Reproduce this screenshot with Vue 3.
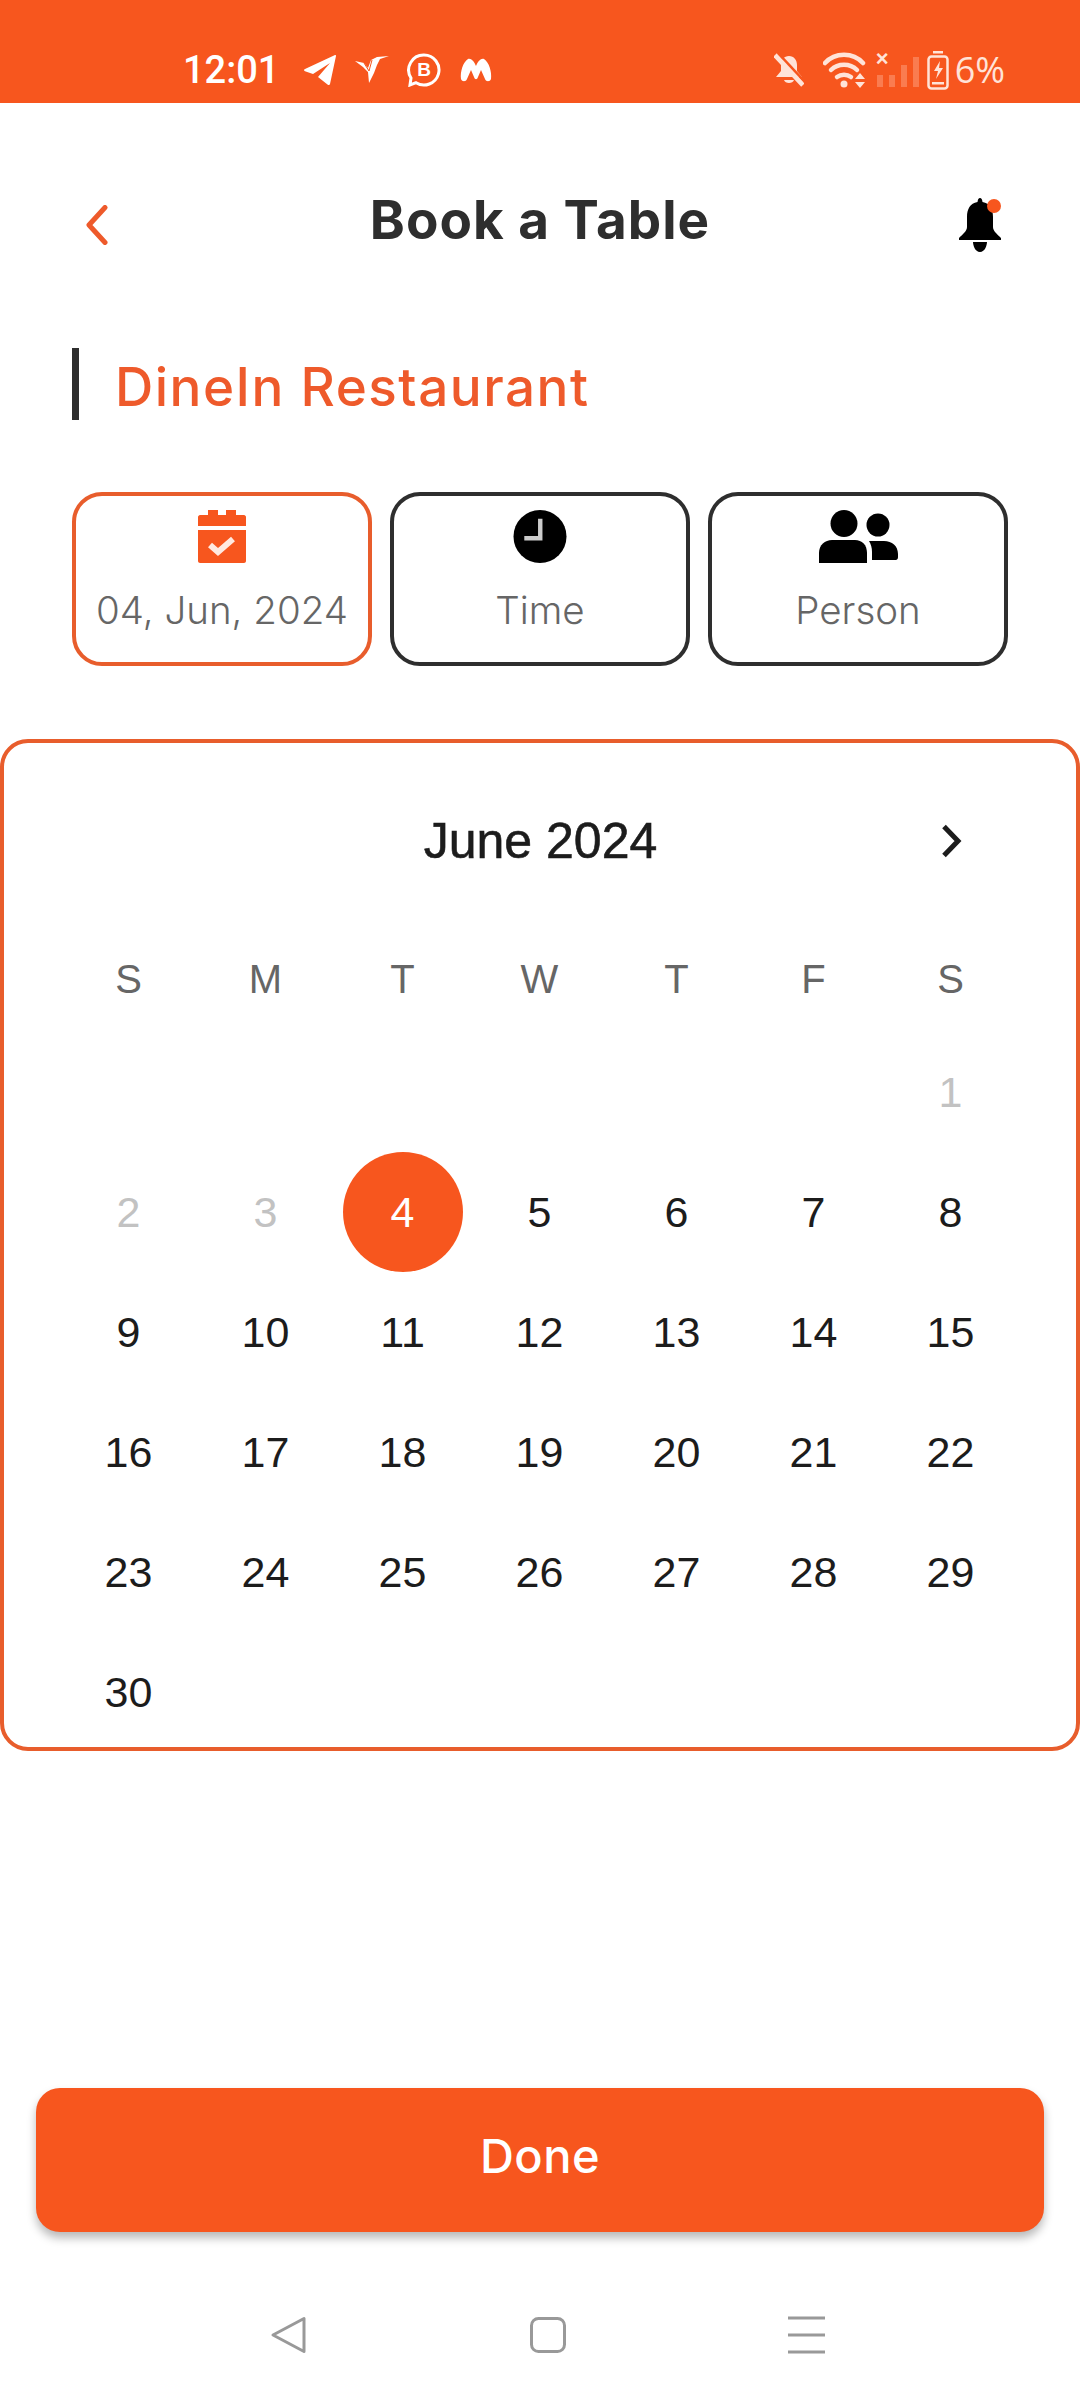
<script setup>
const weekdays = ['S', 'M', 'T', 'W', 'T', 'F', 'S']
const days = []
for (let i = 0; i < 6; i++) days.push({ label: '', cls: '' })
days.push({ label: '1', cls: 'muted' })
for (let d = 2; d <= 30; d++) {
  days.push({ label: String(d), cls: d < 4 ? 'muted' : d === 4 ? 'selected' : '' })
}
</script>

<template>
  <div class="screen">
    <div class="status">
      <div class="status-left">
        <span class="clock">12:01</span>
        <svg class="si" width="34" height="30" viewBox="0 0 34 30"><path fill="#fff" d="M33 1 27 29c-.3 1-1.300 1.300-2.200.7L15 22l12-14-17 11-8-2.800c-1.300-.5-1.300-1.700 0-2.300L31.500.2C32.500-.2 33.300.2 33 1z"/></svg>
        <svg class="si s2" width="34" height="28" viewBox="0 0 34 28"><path fill="#fff" d="M0 5l9 2 4 5 3-8 6-3 12-1-9 3-3 6-3 8-5 10-1-11-5-5z"/><path stroke="#F7561E" stroke-width="1" fill="none" d="M9 7l5 8 3-11"/></svg>
        <svg class="si s3" width="34" height="34" viewBox="0 0 34 34"><path fill="none" stroke="#fff" stroke-width="3" d="M17 2a15 15 0 1 1-8 27.700L3 32l1-7A15 15 0 0 1 17 2z"/><text x="17" y="23" text-anchor="middle" class="b-letter">B</text></svg>
        <svg class="si s4" width="32" height="24" viewBox="0 0 32 24"><path fill="#fff" d="M1 21C0 14 3 4 8 1c3-1 6 2 8 7 2-5 5-8 8-7 5 3 8 13 7 20-1 3-5 3-6 0l-4-9-3 7c-1 3-3 3-4 0l-3-7-4 9c-1 3-5 3-6 0z"/></svg>
      </div>
      <div class="status-right">
        <svg class="sr" width="30" height="34" viewBox="0 0 30 34"><path fill="#FFE3D8" d="M15 3c5 0 8 4 8 9v6l5 6H2l5-6v-6c0-5 3-9 8-9zM10 27h10c-1 4-9 4-10 0z"/><path stroke="#FFE3D8" stroke-width="5" d="M1 2l28 30" /><path stroke="#F7561E" stroke-width="2.500" d="M4 0l28 30"/></svg>
        <svg class="sr r2" width="44" height="36" viewBox="0 0 44 36"><g fill="none" stroke="#FFE3D8" stroke-width="4.500" stroke-linecap="round"><path d="M2 11c10-11 28-11 38 0"/><path d="M8 18c7-7 19-7 26 0"/><path d="M14 25c4-3 10-3 14 0"/></g><circle cx="21" cy="32" r="3.500" fill="#FFE3D8"/><path fill="#FFE3D8" d="M37 21l5 6H32zM32 30h10l-5 6z"/></svg>
        <div class="signal">
          <span class="x">×</span>
          <i class="b1"></i><i class="b2"></i><i class="b3"></i><i class="b4"></i>
        </div>
        <svg class="sr r3" width="22" height="40" viewBox="0 0 22 40"><rect x="1.500" y="6.500" width="19" height="32" rx="3" fill="none" stroke="#FFE3D8" stroke-width="2.500"/><rect x="6" y="1" width="10" height="2.500" fill="#FFE3D8"/><path fill="#FFE3D8" d="M13 11l-6 10h4l-2 8 7-11h-4zM5 32h12v2.500H5z"/></svg>
        <span class="pct">6%</span>
      </div>
    </div>

    <header class="topbar">
      <svg class="back" width="24" height="40" viewBox="0 0 24 40"><path d="M20 2.500 4 20l16 17.500" fill="none" stroke="#EE5A2B" stroke-width="5" stroke-linecap="round" stroke-linejoin="round"/></svg>
      <h1>Book a Table</h1>
      <span class="bell">
        <svg width="44" height="54" viewBox="0 0 44 54"><path fill="#000" d="M22 0c1.500 0 2 1 2.500 4C32 5.500 35 11 35 19v10c0 4 4 7 8 11v2H1v-2c4-4 8-7 8-11V19C9 11 12 5.500 19.500 4 20 1 20.500 0 22 0zM15 44h14c0 3-2 10-7 10s-7-7-7-10z"/></svg>
        <i class="dot"></i>
      </span>
    </header>

    <div class="section"><h2>DineIn Restaurant</h2></div>

    <div class="chips">
      <div class="chip active">
        <svg width="48" height="53" viewBox="0 0 48 53"><path fill="#F7561E" d="M10 0h10v5h8V0h10v5h8c1 0 2 1 2 2v9H0V7c0-1 1-2 2-2h8zM0 20h48v31c0 1-1 2-2 2H2c-1 0-2-1-2-2z"/><path fill="none" stroke="#FFE9E0" stroke-width="6" d="M12 35l8 7 15-13"/></svg>
        <span>04, Jun, 2024</span>
      </div>
      <div class="chip">
        <svg width="54" height="53" viewBox="0 0 54 54"><circle cx="27" cy="27" r="27" fill="#000"/><path fill="#ccc" d="M25 9h4.500v22H11v-4.500h14z"/></svg>
        <span>Time</span>
      </div>
      <div class="chip">
        <svg width="79" height="53" viewBox="0 0 79 53"><g fill="#000"><circle cx="25" cy="13.500" r="13.500"/><path d="M0 53V43c0-8 6-13 13-13h23c7 0 12 5 12 13v10z"/><circle cx="59" cy="15" r="11.500"/><path d="M50 31h15c8 0 14 5 14 13v3c0 3-2 3-3 3H53V42c0-4-1-8-3-11z"/></g></svg>
        <span>Person</span>
      </div>
    </div>

    <section class="calendar">
      <div class="cal-head">
        <span class="month">June 2024</span>
        <svg class="next" width="22" height="34" viewBox="0 0 22 34"><path d="M3 2.500 17 17 3 31.500" fill="none" stroke="#1c1c1c" stroke-width="5"/></svg>
      </div>
      <div class="grid weekdays">
        <span v-for="(w, i) in weekdays" :key="i">{{ w }}</span>
      </div>
      <div class="grid days">
        <div v-for="(d, i) in days" :key="i" class="day" :class="d.cls"><span>{{ d.label }}</span></div>
      </div>
    </section>

    <div class="spacer"></div>

    <button class="done">Done</button>

    <nav class="navbar">
      <svg width="38" height="38" viewBox="0 0 38 38"><path d="M34 2.500v33L3 19z" fill="none" stroke="#999" stroke-width="3" stroke-linejoin="round"/></svg>
      <svg width="38" height="38" viewBox="0 0 38 38"><rect x="2.500" y="2.500" width="33" height="33" rx="7" fill="none" stroke="#999" stroke-width="3"/></svg>
      <svg width="38" height="38" viewBox="0 0 38 38"><path d="M0 2h37M0 19h37M0 36h37" stroke="#999" stroke-width="3"/></svg>
    </nav>
  </div>
</template>

<style scoped>
.screen {
  width: 1080px;
  height: 2400px;
  background: #fff;
  display: flex;
  flex-direction: column;
  overflow: hidden;
  font-family: "Inter", "Liberation Sans", sans-serif;
}
.status {
  height: 103px;
  flex: none;
  background: #F7561E;
  display: flex;
  justify-content: space-between;
  align-items: flex-start;
  padding: 50px 75px 0 183px;
  box-sizing: border-box;
  color: #fff;
}
.status-left, .status-right { display: flex; align-items: center; height: 40px; }
.clock { font: 500 38px/40px Roboto, sans-serif; color: #fff; margin-right: 24px; }
.si { display: block; }
.s2 { margin-left: 18px; }
.s3 { margin-left: 18px; }
.s4 { margin-left: 19px; }
.b-letter { font: 700 19px "Liberation Sans", sans-serif; fill: #fff; }
.sr { display: block; }
.r2 { margin-left: 19px; }
.r3 { margin-left: 8px; }
.signal { position: relative; display: flex; align-items: flex-end; gap: 6px; height: 34px; margin-left: 10px; }
.signal i { display: block; width: 6px; background: #FA7C50; }
.signal .b1 { height: 12px; }
.signal .b2 { height: 12px; }
.signal .b3 { height: 22px; }
.signal .b4 { height: 30px; }
.signal .x { position: absolute; left: -1px; top: -5px; font: 700 22px/22px "Liberation Sans", sans-serif; color: #FFE3D8; }
.pct { font: 500 36px/40px "Open Sans", sans-serif; color: #FFE3D8; margin-left: 6px; }

.topbar {
  height: 234px;
  flex: none;
  box-sizing: border-box;
  display: grid;
  grid-template-columns: 1fr auto 1fr;
  align-items: center;
  padding: 0 78px;
}
.topbar h1 {
  margin: 0;
  font: 700 53px/60px "Inter", sans-serif;
  letter-spacing: 1px;
  color: #2e2e2e;
  white-space: nowrap;
}
.back { justify-self: start; margin: 10px 0 0 7px; }
.bell { justify-self: end; margin-top: 10px; position: relative; width: 44px; height: 54px; }
.bell svg { display: block; }
.dot { position: absolute; right: 1px; top: 1px; width: 14px; height: 14px; border-radius: 50%; background: #F7561E; }

.section {
  margin: 11px 0 0 72px;
  height: 72px;
  border-left: 7px solid #2e2e2e;
  padding-left: 36px;
  display: flex;
  align-items: center;
}
.section h2 {
  margin: 6px 0 0;
  font: 500 53px/60px "Inter", sans-serif;
  letter-spacing: 1.5px;
  color: #EE5A2B;
}

.chips {
  display: flex;
  gap: 18px;
  margin: 72px 72px 0;
}
.chip {
  width: 300px;
  height: 174px;
  box-sizing: border-box;
  border: 4px solid #2e2e2e;
  border-radius: 30px;
  display: flex;
  flex-direction: column;
  align-items: center;
  padding-top: 14px;
  background: #fff;
}
.chip svg { display: block; }
.chip span {
  margin-top: 22px;
  font: 300 38.500px/50px "Inter", sans-serif;
  color: #666;
  white-space: nowrap;
}
.chip.active { border-color: #E85D2C; }

.calendar {
  margin-top: 73px;
  height: 1012px;
  box-sizing: border-box;
  border: 4px solid #E85D2C;
  border-radius: 28px;
  padding: 0 57px 0 56px;
  flex: none;
}
.cal-head {
  height: 102px;
  margin-top: 47px;
  position: relative;
  display: flex;
  align-items: center;
  justify-content: center;
  padding-left: 2px;
}
.month { font: 400 50px/56px "Liberation Sans", sans-serif; color: #1c1c1c; -webkit-text-stroke: 0.6px #1c1c1c; }
.next { position: absolute; right: 56px; top: 34px; }
.grid { display: grid; grid-template-columns: repeat(7, 137px); }
.weekdays { height: 107px; margin-top: 33px; align-items: center; text-align: center; font: 400 40px/44px "Liberation Sans", sans-serif; color: #666; }
.days { grid-auto-rows: 120px; }
.day {
  display: flex;
  align-items: center;
  justify-content: center;
  font: 400 43px/44px "Liberation Sans", sans-serif;
  color: #1c1c1c;
}
.day.muted { color: #c2c2c2; }
.day.selected span {
  width: 120px;
  height: 120px;
  border-radius: 50%;
  background: #F7561E;
  color: #fff;
  display: flex;
  align-items: center;
  justify-content: center;
}
.spacer { flex: 1; }
.done {
  flex: none;
  margin: 0 36px;
  height: 144px;
  padding: 0 0 9px;
  border: 0;
  border-radius: 24px;
  background: #F7561E;
  box-shadow: 0 6px 10px rgba(0, 0, 0, 0.28);
  color: #fff;
  font: 500 47px/56px "Inter", sans-serif;
  letter-spacing: 0.5px;
}
.navbar {
  flex: none;
  height: 168px;
  box-sizing: border-box;
  padding: 84px 0 0 270px;
  display: flex;
  align-items: flex-start;
  gap: 221px;
}
.navbar svg { display: block; }
</style>
